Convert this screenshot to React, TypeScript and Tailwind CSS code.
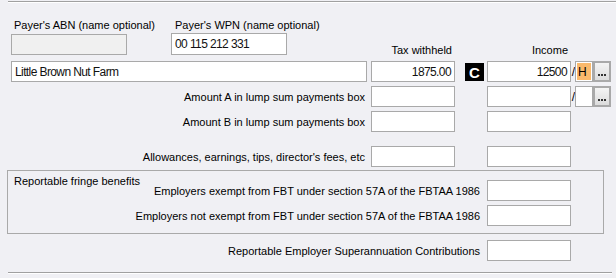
import * as React from "react";

const inputFont =
  "font-['Liberation_Sans',Arial,sans-serif] text-[12px] leading-none tracking-[-0.6px]";

interface FieldProps {
  className?: string;
  value?: string;
  right?: boolean;
  disabled?: boolean;
}

const Field = ({ className = "", value = "", right, disabled }: FieldProps) => (
  <div
    className={`flex h-[21px] shrink-0 items-center border border-[#a9a9a9] px-[3px] ${
      disabled ? "bg-[#f0f0f0]" : "bg-white"
    } ${right ? "justify-end" : ""} ${className}`}
  >
    <span className={`${inputFont} text-[#111]`}>{value}</span>
  </div>
);

const Dots = () => (
  <div className="flex h-[21px] w-[18px] shrink-0 items-end justify-center border-2 border-[#a9a9a9] bg-gradient-to-b from-[#f4f4f4] to-[#dcdcdc] pb-[4px]">
    <span className="flex gap-[1px]">
      <span className="h-[2px] w-[2px] bg-[#333]" />
      <span className="h-[2px] w-[2px] bg-[#333]" />
      <span className="h-[2px] w-[2px] bg-[#333]" />
    </span>
  </div>
);

const Slash = () => (
  <div className={`flex w-[4px] shrink-0 justify-center ${inputFont}`}>/</div>
);

const Row = ({
  label,
  period = false,
  className = "",
}: {
  label: string;
  period?: boolean;
  className?: string;
}) => (
  <div className={`flex items-center ${className}`}>
    <div className="w-[360px] shrink-0 pr-[6px] text-right">{label}</div>
    <Field className="w-[84px]" />
    <div className="w-[32px] shrink-0" />
    <Field className="w-[84px]" />
    {period && (
      <>
        <Slash />
        <Field className="w-[18px]" />
        <Dots />
      </>
    )}
  </div>
);

const App = () => {
  return (
    <div className="relative h-[278px] w-[616px] overflow-hidden bg-[#f0f0f4] font-['Liberation_Sans',Arial,sans-serif] text-[11px] leading-[14px] text-black">
      <div className="ml-[8px] mt-px border-t border-[#a0a0a0] shadow-[0_1px_0_#ffffff]" />

      <div className="ml-[11px] mt-[16px] flex">
        <div className="w-[160px] pl-[3px]">Payer's ABN (name optional)</div>
        <div className="pl-[4px]">Payer's WPN (name optional)</div>
      </div>

      <div className="ml-[11px] mt-[1px] flex items-start">
        <Field className="mt-[1px] w-[116px]" disabled />
        <div className="w-[44px]" />
        <Field className="h-[22px] w-[116px]" value="00 115 212 331" />
        <div className="w-[84px]" />
        <div className="mt-[10px] w-[84px] pr-[3px] text-right">Tax withheld</div>
        <div className="w-[32px]" />
        <div className="mt-[10px] w-[84px] pr-[3px] text-right">Income</div>
      </div>

      <div className="ml-[11px] mt-[4px] flex items-center">
        <Field className="w-[356px]" value="Little Brown Nut Farm" />
        <div className="w-[4px]" />
        <Field className="w-[84px]" value="1875.00" right />
        <div className="w-[10px]" />
        <div className="flex h-[18px] w-[19px] shrink-0 items-center justify-center bg-black pt-[1px] text-[15px] font-bold leading-none text-white">
          C
        </div>
        <div className="w-[3px]" />
        <Field className="w-[84px]" value="12500" right />
        <Slash />
        <div className="flex h-[21px] w-[18px] shrink-0 items-stretch border border-[#a9a9a9] bg-white p-px">
          <div className={`flex flex-1 items-center bg-[#f9b96c] pl-px ${inputFont}`}>H</div>
        </div>
        <Dots />
      </div>

      <Row label="Amount A in lump sum payments box" period className="ml-[11px] mt-[4px]" />
      <Row label="Amount B in lump sum payments box" className="ml-[11px] mt-[4px]" />
      <Row
        label="Allowances, earnings, tips, director's fees, etc"
        className="ml-[11px] mt-[14px]"
      />

      <div className="ml-[7px] mt-[3px] w-[597px] border border-[#a9a9a9] pb-[7px] pt-[9px]">
        <div className="flex items-center">
          <div className="-mt-[6px] w-[140px] shrink-0 self-start whitespace-nowrap pl-[6px]">
            Reportable fringe benefits
          </div>
          <div className="w-[339px] shrink-0 pr-[7px] text-right">
            Employers exempt from FBT under section 57A of the FBTAA 1986
          </div>
          <Field className="w-[84px]" />
        </div>
        <div className="mt-[4px] flex items-center">
          <div className="w-[479px] shrink-0 pr-[7px] text-right">
            Employers not exempt from FBT under section 57A of the FBTAA 1986
          </div>
          <Field className="w-[84px]" />
        </div>
      </div>

      <div className="ml-[8px] mt-[6px] flex items-center">
        <div className="w-[479px] shrink-0 pr-[7px] text-right">
          Reportable Employer Superannuation Contributions
        </div>
        <Field className="w-[84px]" />
      </div>

      <div className="ml-[8px] mt-[11px] w-[604px] border-t border-[#a0a0a0] shadow-[0_1px_0_#ffffff]" />
    </div>
  );
};

export default App;
